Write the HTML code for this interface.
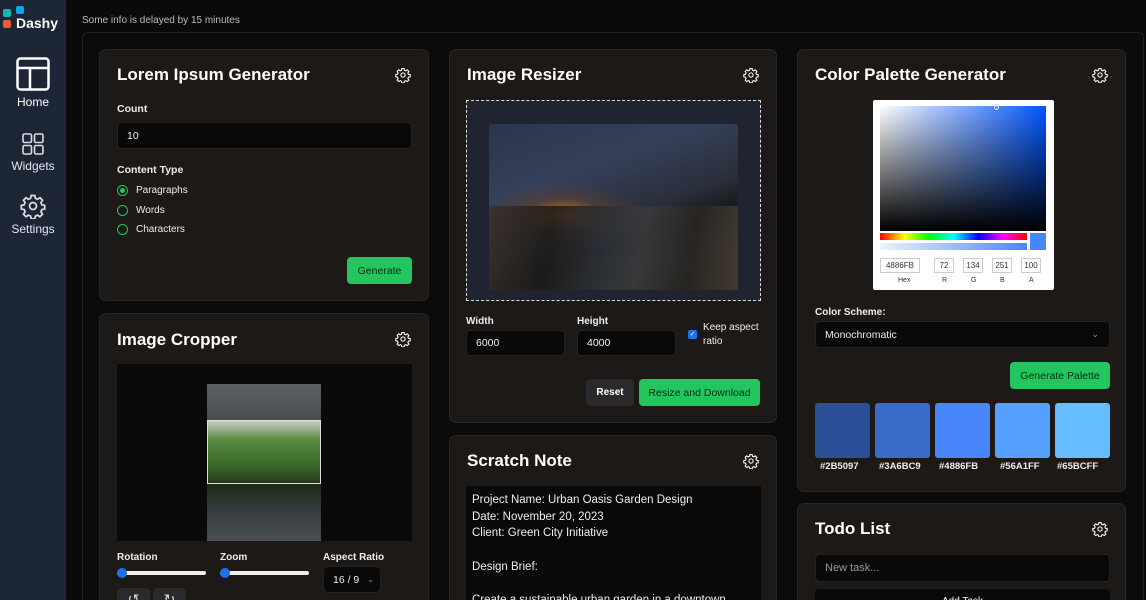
<!DOCTYPE html>
<html style="width:1146px;height:600px;overflow:hidden"><head><style>
*{box-sizing:border-box;margin:0;padding:0}
body{width:1146px;height:600px;overflow:hidden;background:#0b0a0a;font-family:"Liberation Sans",sans-serif;color:#fff;position:relative}
.side{position:absolute;left:0;top:0;width:66px;height:600px;background:#1d2636}
.nav{position:absolute;left:0;width:66px;text-align:center;font-size:12px;color:#e5e7eb}
.info{position:absolute;left:82px;top:15px;font-size:10px;color:#bbb}
.cont{position:absolute;left:82px;top:32px;width:1062px;height:568px;border:1px solid #222;border-bottom:none;border-radius:6px 6px 0 0;background:#0c0b0b}
.card{position:absolute;background:#1c1917;border:1px solid #2a2624;border-radius:7px;overflow:hidden}
.open{border-bottom:none;border-radius:7px 7px 0 0}
.card h2{position:absolute;left:17px;top:15px;font-size:17px;font-weight:bold}
.gear{position:absolute;right:17px;top:17px}
.lbl{position:absolute;font-size:10.5px;font-weight:bold;color:#eee}
.inp{position:absolute;background:#0a0909;border:1px solid #252220;border-radius:4px;font-size:10.5px;padding-left:9px;display:flex;align-items:center;color:#eee}
.btn{position:absolute;background:#22c55e;border-radius:4px;color:#062a12;font-size:10.5px;display:flex;align-items:center;justify-content:center}
.radio{position:absolute;left:17px;width:11px;height:11px;border:1.5px solid #22c55e;border-radius:50%}
.rl{position:absolute;left:36px;font-size:10px;color:#eee}
</style></head><body>
<div class="side">
 <div style="position:absolute;left:3px;top:9px;width:8px;height:8px;background:#14b8a6;border-radius:2px"></div>
 <div style="position:absolute;left:16px;top:6px;width:8px;height:8px;background:#0ea5e9;border-radius:2px"></div>
 <div style="position:absolute;left:3px;top:20px;width:8px;height:8px;background:#f05a30;border-radius:2px"></div>
 <div style="position:absolute;left:16px;top:15px;font-size:14px;font-weight:bold">Dashy</div>
 <svg style="position:absolute;left:16px;top:57px" width="34" height="34" viewBox="0 0 34 34" fill="none" stroke="#fff" stroke-width="2.5"><rect x="1.5" y="1.5" width="31" height="31" rx="3"/><line x1="1.5" y1="11" x2="32.5" y2="11"/><line x1="14" y1="11" x2="14" y2="32.5"/></svg>
 <div class="nav" style="top:95px;color:#fff">Home</div>
 <svg style="position:absolute;left:22px;top:133px" width="22" height="22" viewBox="0 0 22 22" fill="none" stroke="#ddd" stroke-width="1.6"><rect x="1" y="1" width="8.5" height="8.5" rx="1.5"/><rect x="12.5" y="1" width="8.5" height="8.5" rx="1.5"/><rect x="1" y="12.5" width="8.5" height="8.5" rx="1.5"/><rect x="12.5" y="12.5" width="8.5" height="8.5" rx="1.5"/></svg>
 <div class="nav" style="top:159px">Widgets</div>
 <svg style="position:absolute;left:20px;top:193px" width="26" height="26" viewBox="0 0 24 24" fill="none" stroke="#ddd" stroke-width="1.6"><path d="M10.3 2.3h3.4l.5 2.6 2 .9 2.2-1.5 2.4 2.4-1.5 2.2.9 2 2.6.5v3.4l-2.6.5-.9 2 1.5 2.2-2.4 2.4-2.2-1.5-2 .9-.5 2.6h-3.4l-.5-2.6-2-.9-2.2 1.5-2.4-2.4 1.5-2.2-.9-2-2.6-.5v-3.4l2.6-.5.9-2-1.5-2.2 2.4-2.4 2.2 1.5 2-.9z"/><circle cx="12" cy="12" r="3.2"/></svg>
 <div class="nav" style="top:222px">Settings</div>
</div>
<div class="info">Some info is delayed by 15 minutes</div>
<div class="cont"></div>

<svg width="0" height="0" style="position:absolute"><defs><g id="g" fill="none" stroke="#fff" stroke-width="1.6"><path d="M10.3 2.3h3.4l.5 2.6 2 .9 2.2-1.5 2.4 2.4-1.5 2.2.9 2 2.6.5v3.4l-2.6.5-.9 2 1.5 2.2-2.4 2.4-2.2-1.5-2 .9-.5 2.6h-3.4l-.5-2.6-2-.9-2.2 1.5-2.4-2.4 1.5-2.2-.9-2-2.6-.5v-3.4l2.6-.5.9-2-1.5-2.2 2.4-2.4 2.2 1.5 2-.9z"/><circle cx="12" cy="12" r="3.2"/></g></defs></svg>

<!-- Lorem -->
<div class="card" style="left:99px;top:49px;width:330px;height:252px">
 <h2>Lorem Ipsum Generator</h2><svg class="gear" width="16" height="16" viewBox="0 0 24 24"><use href="#g"/></svg>
 <div class="lbl" style="left:17px;top:53px">Count</div>
 <div class="inp" style="left:17px;top:72px;width:295px;height:27px">10</div>
 <div class="lbl" style="left:17px;top:114px">Content Type</div>
 <div class="radio" style="top:135px"><div style="margin:1.5px;width:5px;height:5px;border-radius:50%;background:#22c55e"></div></div><div class="rl" style="top:135px">Paragraphs</div>
 <div class="radio" style="top:155px"></div><div class="rl" style="top:155px">Words</div>
 <div class="radio" style="top:174px"></div><div class="rl" style="top:174px">Characters</div>
 <div class="btn" style="left:247px;top:207px;width:65px;height:27px">Generate</div>
</div>

<!-- Cropper -->
<div class="card open" style="left:99px;top:313px;width:330px;height:287px">
 <h2 style="top:16px">Image Cropper</h2><svg class="gear" style="top:17px" width="16" height="16" viewBox="0 0 24 24"><use href="#g"/></svg>
 <div style="position:absolute;left:17px;top:50px;width:295px;height:177px;background:#0b0a0a">
  <div style="position:absolute;left:90px;top:20px;width:114px;height:157px;background:linear-gradient(#5c6064 0%,#4a5050 20%,#2e4a22 40%,#36521e 55%,#1e2a18 65%,#343c3c 80%,#4a4e50 100%)"></div>
  <div style="position:absolute;left:90px;top:56px;width:114px;height:64px;border:1px solid #ddd;background:linear-gradient(#c8ccc8 0%,#5a8a40 30%,#3a6a28 70%,#2a3a20 100%)"></div>
 </div>
 <div class="lbl" style="left:17px;top:238px;font-size:10px">Rotation</div>
 <div class="lbl" style="left:120px;top:238px;font-size:10px">Zoom</div>
 <div class="lbl" style="left:223px;top:238px;font-size:10px">Aspect Ratio</div>
 <div style="position:absolute;left:17px;top:257px;width:89px;height:4px;background:#eee;border-radius:2px"></div><div style="position:absolute;left:17px;top:254px;width:10px;height:10px;border-radius:50%;background:#1a73e8"></div>
 <div style="position:absolute;left:120px;top:257px;width:89px;height:4px;background:#eee;border-radius:2px"></div><div style="position:absolute;left:120px;top:254px;width:10px;height:10px;border-radius:50%;background:#1a73e8"></div>
 <div class="inp" style="left:223px;top:252px;width:58px;height:27px;border-radius:5px">16 / 9 <span style="margin-left:8px;color:#999;font-size:8px">&#8964;</span></div>
 <div style="position:absolute;left:17px;top:274px;width:33px;height:20px;background:#2a2a2c;border-radius:4px;color:#ddd;font-size:14px;text-align:center;line-height:22px">↺</div>
 <div style="position:absolute;left:53px;top:274px;width:33px;height:20px;background:#2a2a2c;border-radius:4px;color:#ddd;font-size:14px;text-align:center;line-height:22px">↻</div>
</div>

<!-- Resizer -->
<div class="card" style="left:449px;top:49px;width:328px;height:374px">
 <h2>Image Resizer</h2><svg class="gear" width="16" height="16" viewBox="0 0 24 24"><use href="#g"/></svg>
 <div style="position:absolute;left:16px;top:50px;width:295px;height:201px;border:1.5px dashed #ddd;background:#1f2430">
  <div style="position:absolute;left:22px;top:23px;width:249px;height:166px;border-radius:3px;background:radial-gradient(ellipse 40% 25% at 30% 55%,#c8702a 0%,rgba(120,70,40,.4) 40%,transparent 80%),linear-gradient(160deg,#2a3550 0%,#35405a 30%,#2a2f3a 55%,#1a1c22 65%,#232628 80%,#0f1012 100%)"></div>
  <div style="position:absolute;left:22px;top:105px;width:249px;height:84px;background:linear-gradient(100deg,#3a3028 0%,#1c1a18 25%,#2c3036 45%,#3a3c3e 60%,#2a2622 80%,#4a4036 100%);opacity:.85"></div>
 </div>
 <div class="lbl" style="left:16px;top:266px;font-size:10px">Width</div>
 <div class="lbl" style="left:127px;top:266px;font-size:10px">Height</div>
 <div class="inp" style="left:16px;top:280px;width:99px;height:26px">6000</div>
 <div class="inp" style="left:127px;top:280px;width:99px;height:26px">4000</div>
 <div style="position:absolute;left:238px;top:280px;width:9px;height:9px;background:#1a73e8;border-radius:2px;color:#fff;font-size:7px;line-height:9px;text-align:center">✓</div>
 <div style="position:absolute;left:253px;top:271px;font-size:10px;line-height:14px;color:#eee">Keep aspect<br>ratio</div>
 <div style="position:absolute;left:136px;top:329px;width:48px;height:27px;background:#2a2a2c;border-radius:4px;font-size:10px;font-weight:bold;display:flex;align-items:center;justify-content:center">Reset</div>
 <div class="btn" style="left:189px;top:329px;width:121px;height:27px">Resize and Download</div>
</div>

<!-- Scratch -->
<div class="card open" style="left:449px;top:435px;width:328px;height:165px">
 <h2>Scratch Note</h2><svg class="gear" width="16" height="16" viewBox="0 0 24 24"><use href="#g"/></svg>
 <div style="position:absolute;left:16px;top:50px;width:295px;height:115px;overflow:hidden;background:#0a0909;padding:6px 6px;font-size:11.5px;line-height:16.7px;color:#eee">Project Name: Urban Oasis Garden Design<br>Date: November 20, 2023<br>Client: Green City Initiative<br><br>Design Brief:<br><br>Create a sustainable urban garden in a downtown</div>
</div>

<!-- Color palette -->
<div class="card" style="left:797px;top:49px;width:329px;height:443px">
 <h2>Color Palette Generator</h2><svg class="gear" width="16" height="16" viewBox="0 0 24 24"><use href="#g"/></svg>
 <div style="position:absolute;left:75px;top:50px;width:181px;height:190px;background:#fff;border-radius:2px">
  <div style="position:absolute;left:7px;top:6px;width:166px;height:125px;background:linear-gradient(to bottom,transparent,#000),linear-gradient(to right,#fff,#0055ff)"></div>
  <div style="position:absolute;left:121px;top:5px;width:5px;height:5px;border:1px solid #fff;border-radius:50%;box-shadow:0 0 1px #000"></div>
  <div style="position:absolute;left:7px;top:133px;width:147px;height:7px;background:linear-gradient(to right,red,yellow,lime,cyan,blue,magenta,red)"></div>
  <div style="position:absolute;left:7px;top:143px;width:147px;height:7px;background:linear-gradient(to right,#eef2fa,#4886fb)"></div>
  <div style="position:absolute;left:157px;top:133px;width:16px;height:17px;background:#4886fb"></div>
  <div style="position:absolute;top:158px;left:7px;width:40px;height:15px;border:1px solid #ccc;font-size:8px;color:#333;text-align:center;line-height:13px">4886FB</div>
  <div style="position:absolute;top:158px;left:61px;width:20px;height:15px;border:1px solid #ccc;font-size:8px;color:#333;text-align:center;line-height:13px">72</div>
  <div style="position:absolute;top:158px;left:90px;width:20px;height:15px;border:1px solid #ccc;font-size:8px;color:#333;text-align:center;line-height:13px">134</div>
  <div style="position:absolute;top:158px;left:119px;width:20px;height:15px;border:1px solid #ccc;font-size:8px;color:#333;text-align:center;line-height:13px">251</div>
  <div style="position:absolute;top:158px;left:148px;width:20px;height:15px;border:1px solid #ccc;font-size:8px;color:#333;text-align:center;line-height:13px">100</div>
  <div style="position:absolute;top:177px;left:0;width:181px;font-size:7px;color:#333"><span style="position:absolute;left:25px">Hex</span><span style="position:absolute;left:69px">R</span><span style="position:absolute;left:98px">G</span><span style="position:absolute;left:127px">B</span><span style="position:absolute;left:156px">A</span></div>
 </div>
 <div class="lbl" style="left:17px;top:257px;font-size:10px">Color Scheme:</div>
 <div class="inp" style="left:17px;top:271px;width:295px;height:27px">Monochromatic<span style="position:absolute;right:10px;color:#999;font-size:9px">&#8964;</span></div>
 <div class="btn" style="left:212px;top:312px;width:100px;height:27px">Generate Palette</div>
 <div style="position:absolute;left:17px;top:353px;width:295px">
  <div style="position:absolute;left:0;width:55px;height:55px;border-radius:3px;background:#2b5097"></div>
  <div style="position:absolute;left:60px;width:55px;height:55px;border-radius:3px;background:#3a6bc9"></div>
  <div style="position:absolute;left:120px;width:55px;height:55px;border-radius:3px;background:#4886fb"></div>
  <div style="position:absolute;left:180px;width:55px;height:55px;border-radius:3px;background:#56a1ff"></div>
  <div style="position:absolute;left:240px;width:55px;height:55px;border-radius:3px;background:#65bcff"></div>
  <div style="position:absolute;top:58px;left:0;width:295px;font-size:9.5px;font-weight:bold;color:#eee"><span style="position:absolute;left:5px">#2B5097</span><span style="position:absolute;left:64px">#3A6BC9</span><span style="position:absolute;left:124px">#4886FB</span><span style="position:absolute;left:185px">#56A1FF</span><span style="position:absolute;left:242px">#65BCFF</span></div>
 </div>
</div>

<!-- Todo -->
<div class="card open" style="left:797px;top:503px;width:329px;height:97px">
 <h2>Todo List</h2><svg class="gear" width="16" height="16" viewBox="0 0 24 24"><use href="#g"/></svg>
 <div class="inp" style="left:17px;top:50px;width:295px;height:28px;color:#999;font-size:11px">New task...</div>
 <div style="position:absolute;left:17px;top:85px;width:295px;height:12px;overflow:hidden;background:#0a0909;border-radius:4px 4px 0 0;text-align:center;font-size:10px;padding-top:8px;line-height:10px">Add Task</div>
</div>
</body></html>
